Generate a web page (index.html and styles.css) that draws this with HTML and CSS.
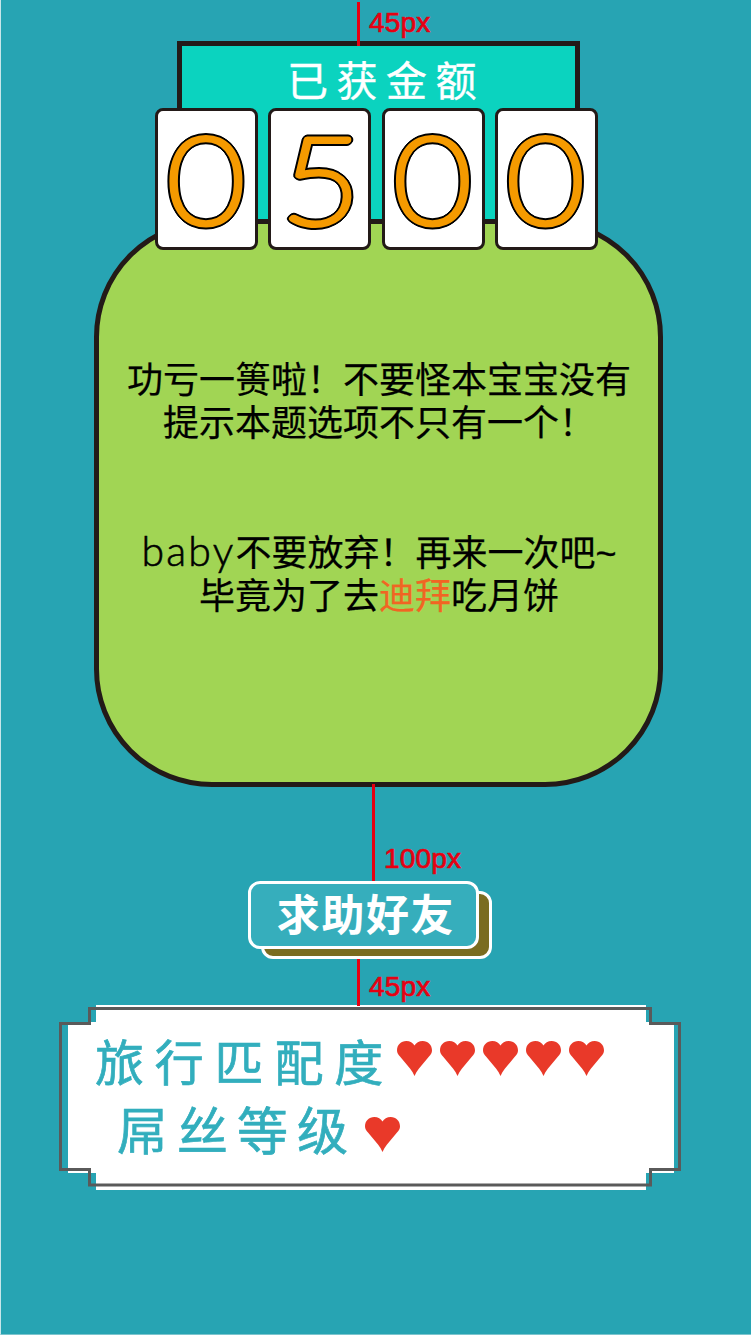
FILE: index.html
```
<!DOCTYPE html>
<html lang="zh-CN">
<head>
<meta charset="utf-8">
<title>已获金额</title>
<link rel="stylesheet" href="styles.css">
</head>
<body>
<svg class="defs" aria-hidden="true">
  <symbol id="heart" viewBox="0 0 35 35"><path d="M17.500 35C16.500 32.500 15 30 13 27.500L3 15.500C1 13.500 0 12 0 9.300C0 4 4 0 9.300 0C13 0 16 1.800 17.500 4.500C19 1.800 22 0 25.700 0C31 0 35 4 35 9.300C35 12 34 13.500 32 15.500L22 27.500C20 30 18.500 32.500 17.500 35Z"/></symbol>
</svg>
<main class="screen">
  <header class="banner">
    <h1 class="banner-title">已获金额</h1>
    <div class="cards">
      <div class="card"><svg class="digit" viewBox="0 0 97 136"><text transform="translate(48 112.500) scale(1.140 1.030)">0</text></svg></div>
      <div class="card"><svg class="digit" viewBox="0 0 97 136"><text transform="translate(49 112.500) skewX(-2) scale(1.160 1.030)">5</text></svg></div>
      <div class="card"><svg class="digit" viewBox="0 0 97 136"><text transform="translate(47.500 112.500) scale(1.140 1.030)">0</text></svg></div>
      <div class="card"><svg class="digit" viewBox="0 0 97 136"><text transform="translate(47.500 112.500) scale(1.140 1.030)">0</text></svg></div>
    </div>
  </header>
  <section class="panel">
    <p class="message">功亏一篑啦！不要怪本宝宝没有<br>提示本题选项不只有一个！</p>
    <p class="message"><span class="latin">baby</span>不要放弃！再来一次吧<span class="tilde">~</span><br>毕竟为了去<span class="accent">迪拜</span>吃月饼</p>
  </section>
  <button class="help" type="button">求助好友</button>
  <section class="result">
    <svg class="frame" viewBox="0 0 622 185" aria-hidden="true">
      <path class="frame-fill" d="M37 0H587V17H615V168H587V185H37V168H9V17H37Z"/>
      <path class="frame-line" d="M30.500 3.500H591.500V18.500H620.500V164.500H591.500V180H30.500V164.500H1.500V18.500H30.500Z"/>
    </svg>
    <div class="rating"><span>旅行匹配度</span>
      <div class="hearts">
        <svg class="heart"><use href="#heart"/></svg><svg class="heart"><use href="#heart"/></svg><svg class="heart"><use href="#heart"/></svg><svg class="heart"><use href="#heart"/></svg><svg class="heart"><use href="#heart"/></svg>
      </div>
    </div>
    <div class="rating rating-level"><span>屌丝等级</span>
      <div class="hearts"><svg class="heart"><use href="#heart"/></svg></div>
    </div>
  </section>
  <div class="measure measure-top">45px</div>
  <div class="measure measure-middle">100px</div>
  <div class="measure measure-bottom">45px</div>
</main>
</body>
</html>
```
FILE: styles.css
```
* { box-sizing: border-box; }
body { margin: 0; background: #27a4b3; }
.defs { position: absolute; width: 0; height: 0; }
.screen {
  position: relative;
  isolation: isolate;
  display: flex;
  flex-direction: column;
  width: 751px;
  height: 1335px;
  padding-top: 41px;
  overflow: hidden;
  background: #27a4b3;
  border-left: 1px solid #c8e6ea;
  border-bottom: 1px solid #7cc5ce;
  font-family: "Noto Sans CJK SC", sans-serif;
}
.banner {
  position: relative;
  z-index: 1;
  flex: none;
  width: 403px;
  height: 183px;
  margin-left: 176px;
  background: #0bd3bf;
  border: 5px solid #231a18;
}
.banner-title {
  height: 62px;
  margin: 0 0 0 105px;
  font-size: 41px;
  font-weight: 400;
  line-height: 64px;
  letter-spacing: 8.500px;
  color: #fff;
  white-space: nowrap;
  -webkit-text-stroke: .4px #fff;
}
.cards { display: flex; gap: 10.300px; width: 444px; margin-left: -27px; }
.card {
  flex: none;
  width: 103px;
  height: 142px;
  background: #fff;
  border: 3px solid #231a18;
  border-radius: 8px;
}
.digit {
  display: block;
  width: 97px;
  height: 136px;
  overflow: visible;
  filter: drop-shadow(1px 1px 0 #000) drop-shadow(-1px -1px 0 #000) drop-shadow(1px -1px 0 #000) drop-shadow(-1px 1px 0 #000);
}
.digit text {
  font-family: Lato, sans-serif;
  font-size: 117px;
  font-weight: 100;
  text-anchor: middle;
  fill: #f59a00;
  stroke: #f59a00;
  stroke-width: 6px;
  stroke-linejoin: round;
}
.panel {
  flex: none;
  display: flex;
  flex-direction: column;
  gap: 86px;
  width: 569px;
  height: 568px;
  margin: -5px 0 0 93px;
  padding: 132px 0 0 1px;
  background: #a1d554;
  border: 5px solid #231a18;
  border-radius: 118px;
}
.message {
  margin: 0;
  font-size: 36px;
  line-height: 43.300px;
  text-align: center;
  white-space: nowrap;
  color: #000;
  -webkit-text-stroke: .25px;
}
.latin {
  font-family: Lato, sans-serif;
  font-weight: 300;
  font-size: 41px;
  line-height: 0;
  letter-spacing: 2.200px;
  -webkit-text-stroke: .6px #000;
}
.tilde { font-family: "Liberation Sans", sans-serif; line-height: 0; }
.accent { color: #f16523; }
.help {
  position: relative;
  flex: none;
  width: 231px;
  height: 68px;
  margin: 94px 0 0 247px;
  padding: 0 0 6px 5px;
  background: #36aebc;
  border: 3px solid #fff;
  border-radius: 12px;
  font-family: "Noto Sans CJK SC", sans-serif;
  font-size: 43px;
  font-weight: 700;
  line-height: 54px;
  letter-spacing: 1.600px;
  color: #fff;
  white-space: nowrap;
}
.help::after {
  content: "";
  position: absolute;
  z-index: -1;
  top: 7px;
  left: 10px;
  box-sizing: border-box;
  width: 231px;
  height: 68px;
  background: #7a6c20;
  border: 3px solid #fff;
  border-radius: 12px;
}
.result {
  position: relative;
  flex: none;
  width: 622px;
  height: 185px;
  margin: 56px 0 0 58px;
  padding: 20px 0 0 36px;
}
.frame { position: absolute; inset: 0; width: 622px; height: 185px; }
.frame-fill { fill: #fff; }
.frame-line { fill: none; stroke: #5a5a5a; stroke-width: 3; }
.rating {
  position: relative;
  display: flex;
  align-items: flex-start;
  height: 68px;
  font-size: 49px;
  line-height: 70px;
  letter-spacing: 10.800px;
  color: #32aebd;
  white-space: nowrap;
  -webkit-text-stroke: .7px #32aebd;
}
.rating-level { padding-left: 22px; font-size: 51px; letter-spacing: 9px; }
.hearts { display: flex; gap: 8px; margin-left: 3px; padding-top: 16px; }
.rating-level .hearts { padding-top: 24px; margin-left: 8px; }
.heart { display: block; width: 35px; height: 35px; fill: #e93929; stroke: none; }
.measure {
  position: absolute;
  z-index: 2;
  padding-left: 9px;
  border-left: 3px solid #e60012;
  font-family: "Liberation Sans", Arial, sans-serif;
  font-size: 28px;
  line-height: 32px;
  letter-spacing: .2px;
  color: #e60012;
  -webkit-text-stroke: .7px #e60012;
}
.measure-top { left: 356px; top: 2px; height: 44px; padding-top: 5px; }
.measure-middle { left: 371px; top: 784px; height: 97px; padding-top: 59px; }
.measure-bottom { left: 356px; top: 959px; height: 47px; padding-top: 12px; }
```
